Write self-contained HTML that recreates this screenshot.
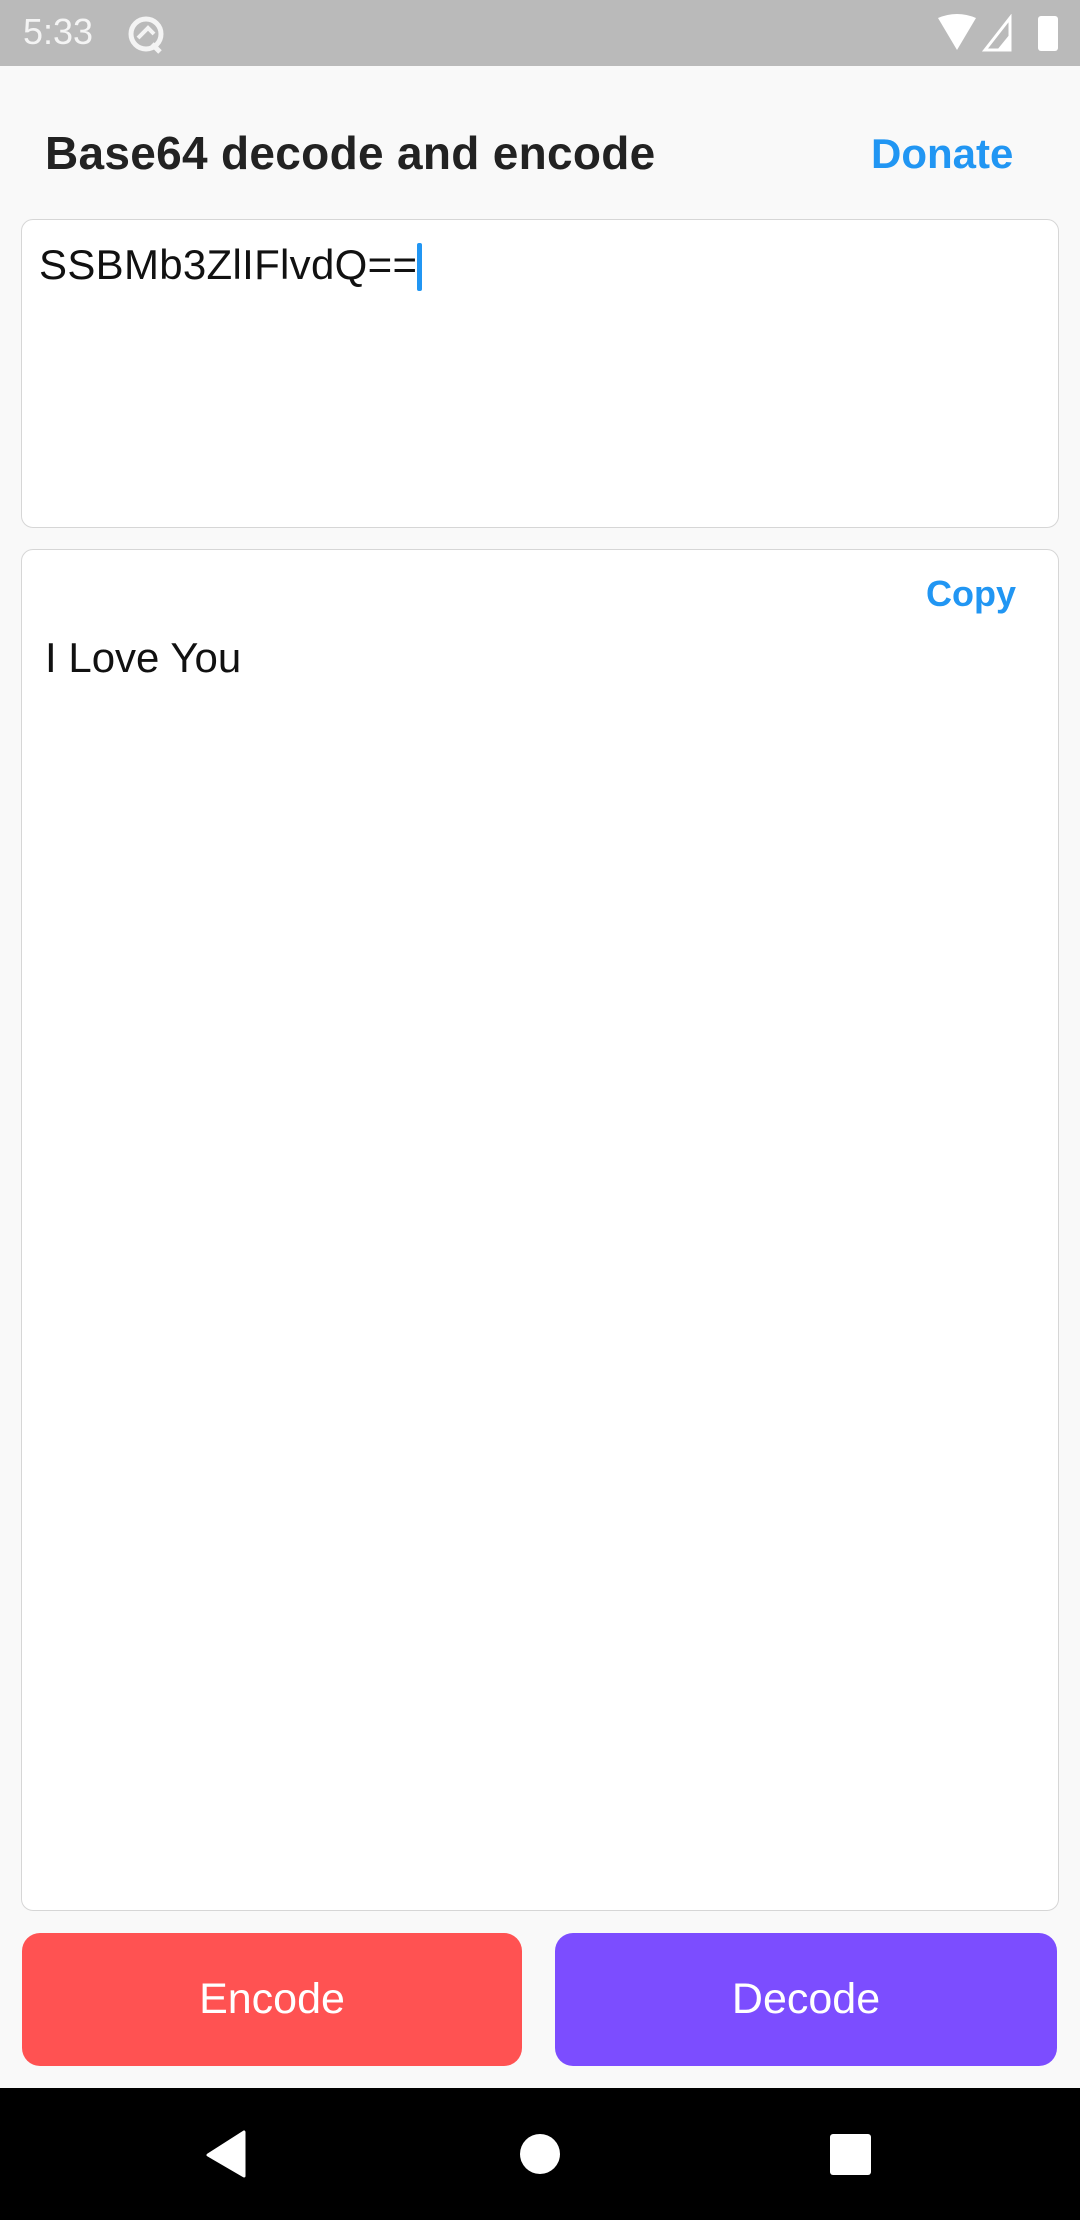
<!DOCTYPE html>
<html><head><meta charset="utf-8"><style>
*{margin:0;padding:0;box-sizing:border-box}
body{width:1080px;height:2220px;position:relative;background:#f9f9f9;font-family:"Liberation Sans",sans-serif;overflow:hidden}
.abs{position:absolute}
</style></head><body>
<div class="abs" style="left:0;top:0;width:1080px;height:66px;background:#bababa"></div>
<div class="abs" style="left:23px;top:12px;font-size:36px;color:#f4f4f4;line-height:40px">5:33</div>
<svg class="abs" style="left:126px;top:14px" width="40" height="40" viewBox="0 0 40 40"><circle cx="20" cy="20" r="15" fill="none" stroke="#f4f4f4" stroke-width="5"/><path d="M12 24 L22 14 L28 20" fill="none" stroke="#f4f4f4" stroke-width="4"/><path d="M26 30 L34 38" stroke="#f4f4f4" stroke-width="5"/></svg>
<svg class="abs" style="left:935px;top:14px" width="130" height="40" viewBox="0 0 130 40"><path d="M3 4 Q22 -4 41 4 L22 36 Z" fill="#fff"/><path d="M50 36 L75 4 L75 36 Z" fill="none" stroke="#fff" stroke-width="3"/><path d="M62 36 L75 20 L75 36Z" fill="#fff"/><rect x="103" y="2" width="20" height="35" rx="3" fill="#fff"/></svg>
<div class="abs" style="left:45px;top:125px;font-size:46px;font-weight:bold;color:#222;line-height:56px;letter-spacing:0.3px">Base64 decode and encode</div>
<div class="abs" style="left:871px;top:126px;font-size:42px;font-weight:bold;color:#2196f3;line-height:56px">Donate</div>
<div class="abs" style="left:21px;top:219px;width:1038px;height:309px;background:#fff;border:1.5px solid #d6d6d6;border-radius:12px"></div>
<div class="abs" style="left:39px;top:241px;font-size:42px;color:#111;line-height:48px;letter-spacing:0.3px">SSBMb3ZlIFlvdQ==</div>
<div class="abs" style="left:417px;top:243px;width:5px;height:48px;background:#2196f3;border-radius:2px"></div>
<div class="abs" style="left:21px;top:549px;width:1038px;height:1362px;background:#fff;border:1.5px solid #d6d6d6;border-radius:12px"></div>
<div class="abs" style="left:926px;top:572px;font-size:36px;font-weight:bold;color:#2196f3;line-height:44px">Copy</div>
<div class="abs" style="left:45px;top:634px;font-size:42px;color:#111;line-height:48px">I Love You</div>
<div class="abs" style="left:22px;top:1933px;width:500px;height:133px;background:#ff5252;border-radius:18px;color:#fff;font-size:43px;text-align:center;line-height:133px">Encode</div>
<div class="abs" style="left:555px;top:1933px;width:502px;height:133px;background:#7c4dff;border-radius:18px;color:#fff;font-size:43px;text-align:center;line-height:133px">Decode</div>
<div class="abs" style="left:0;top:2088px;width:1080px;height:132px;background:#000"></div>
<svg class="abs" style="left:0;top:2088px" width="1080" height="132" viewBox="0 0 1080 132"><path d="M244 44 L244 88 L208 67 Z" fill="#fff" stroke="#fff" stroke-width="3" stroke-linejoin="round"/><circle cx="540" cy="66" r="20" fill="#fff"/><rect x="830" y="46" width="41" height="41" rx="3" fill="#fff"/></svg>
</body></html>
